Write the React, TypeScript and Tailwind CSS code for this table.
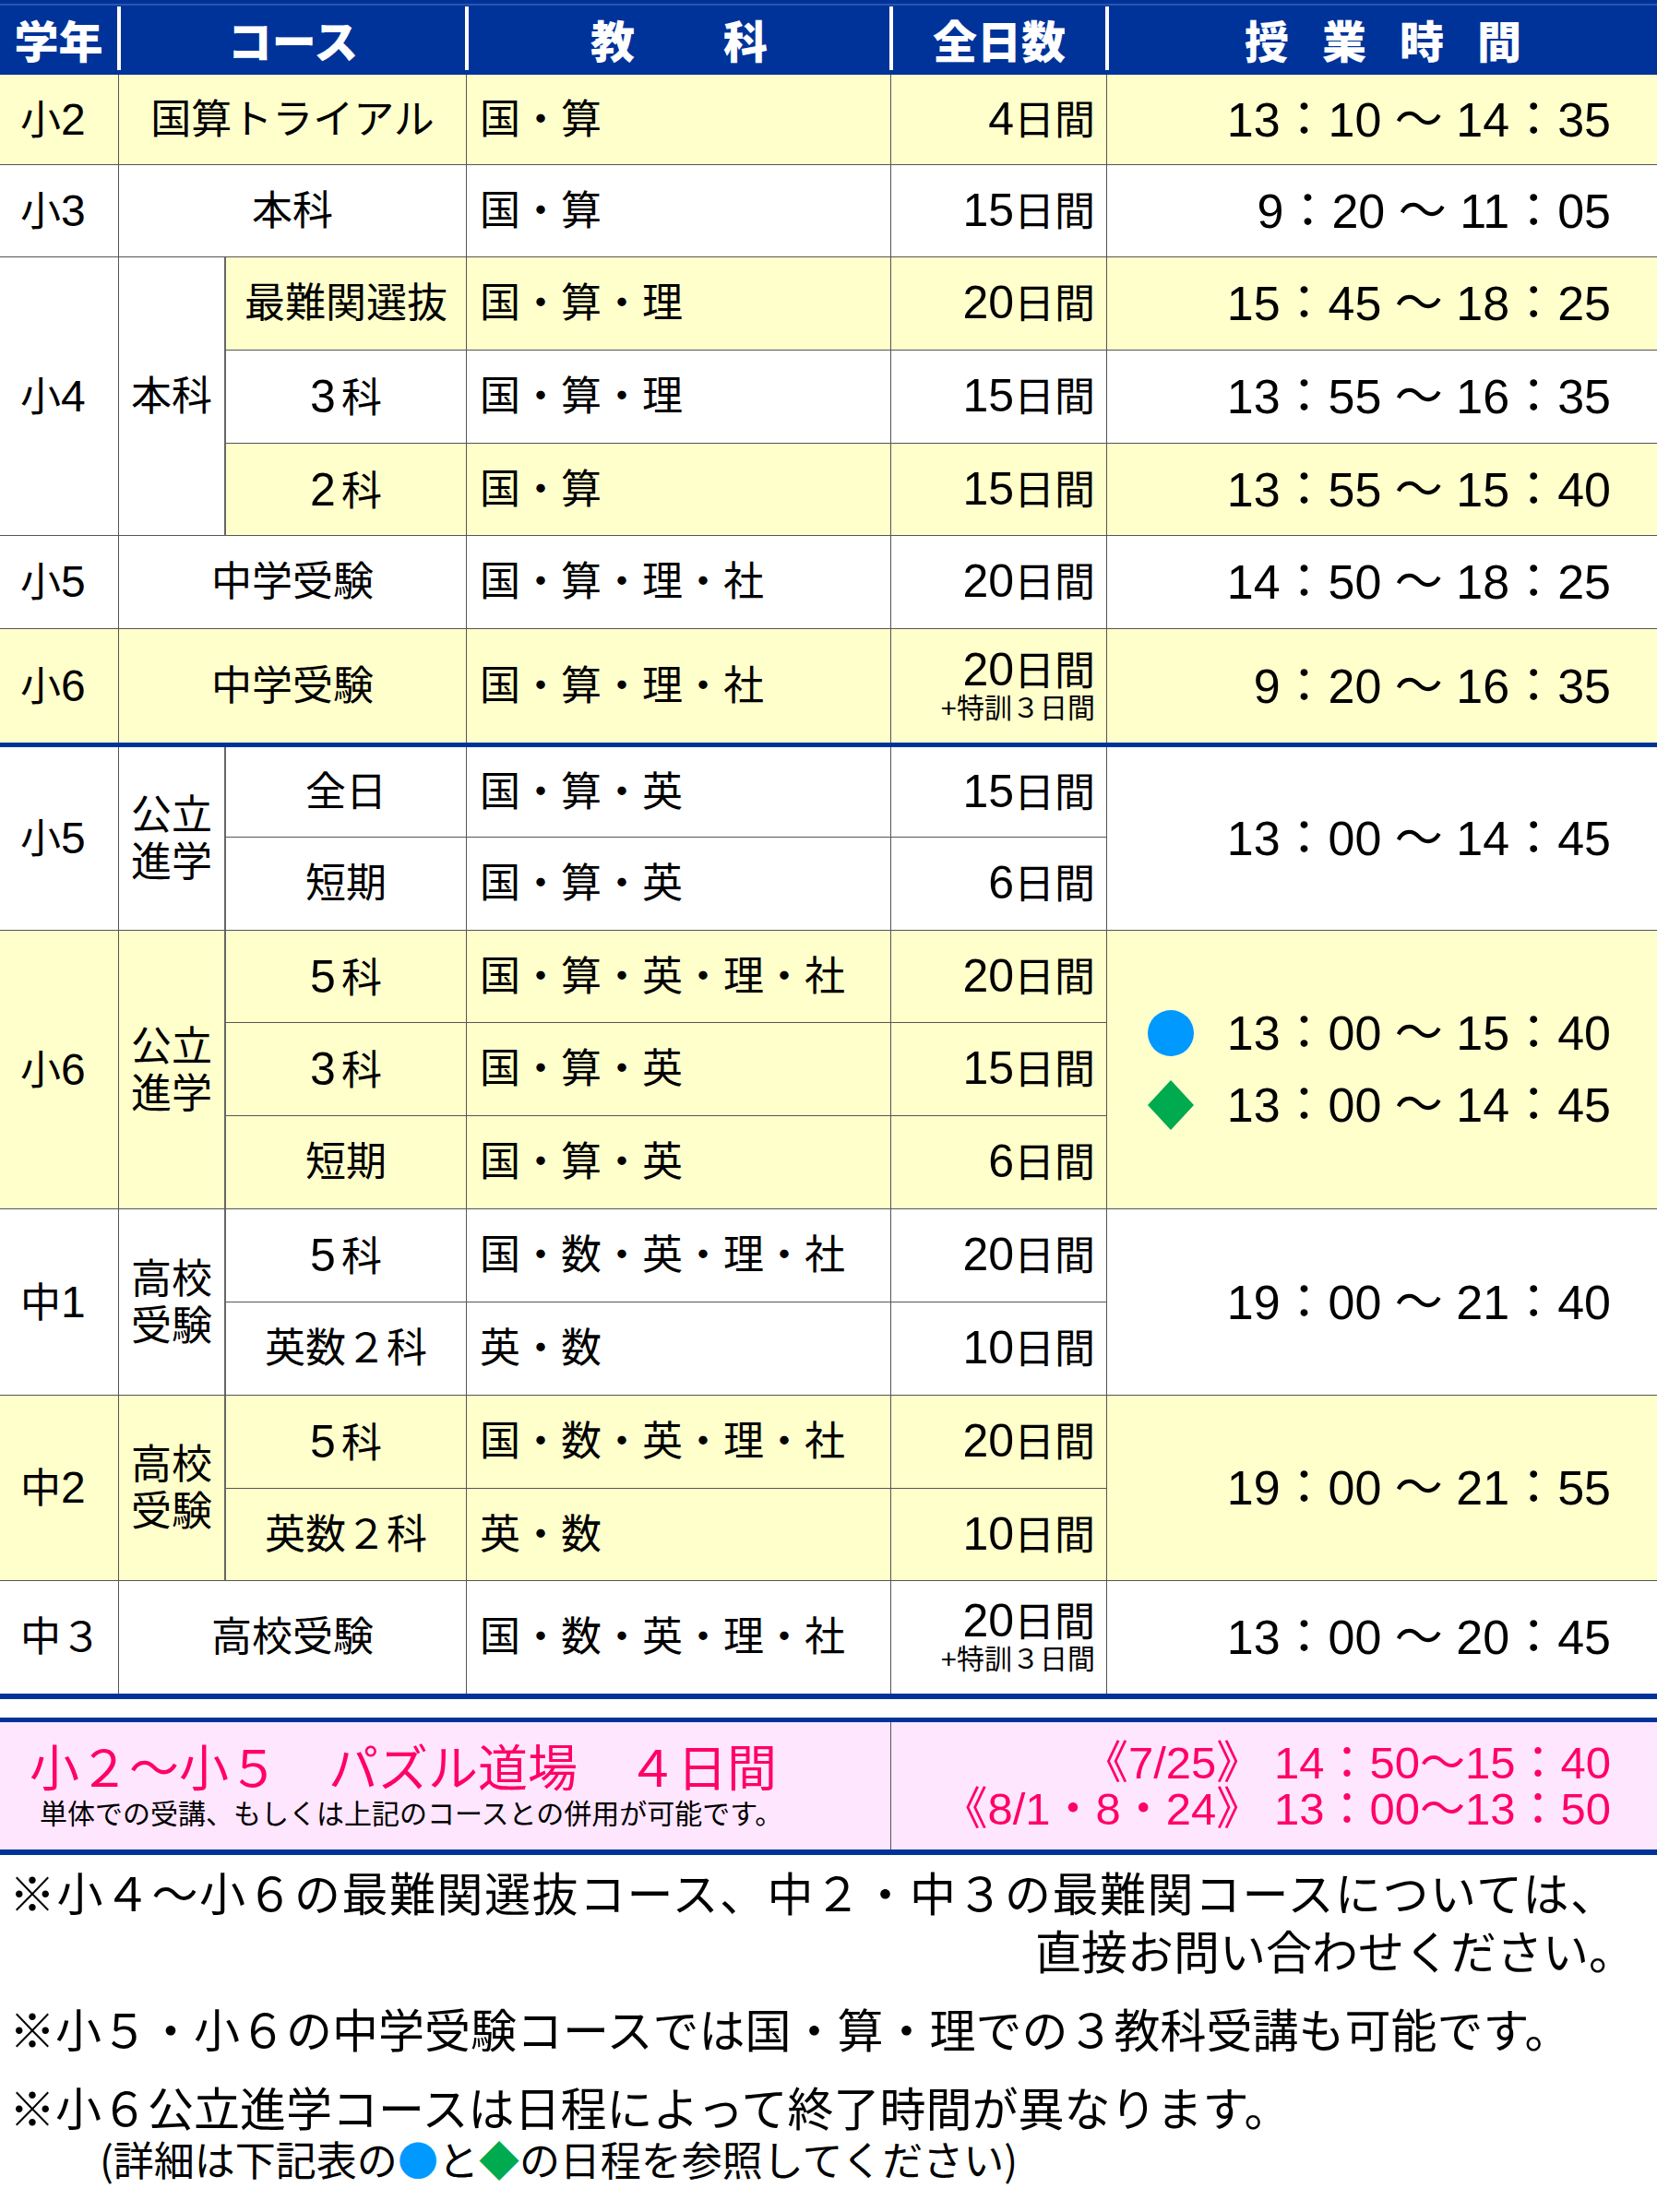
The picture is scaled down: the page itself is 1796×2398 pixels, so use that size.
import type { ReactNode } from 'react';

type Align = 'g' | 'l' | 'c' | 'd' | 'r';

// 셀 정렬: 학년 / 교과 / 코스 / 일수 / 시간
const alignCls: Record<Align, string> = {
  g: 'justify-start pl-[22px]',
  l: 'justify-start pl-[14px]',
  c: 'justify-center',
  d: 'justify-end pr-[12px]',
  r: 'justify-end pr-[50px]',
};

interface CellProps {
  children?: ReactNode;
  className?: string;
  align?: Align;
  yellow?: boolean;
  noR?: boolean;
  noB?: boolean;
  thickR?: boolean;
}

const Cell = ({ children, className = '', align = 'c', yellow = false, noR = false, noB = false, thickR = false }: CellProps) => {
  const right = noR ? '' : thickR ? 'border-r-2 border-r-[#666]' : 'border-r border-r-[#555]';
  const bottom = noB ? '' : 'border-b border-b-[#555]';
  return (
    <div className={`flex items-center ${alignCls[align]} ${yellow ? 'bg-[#ffffcc]' : 'bg-white'} ${right} ${bottom} ${className}`}>
      {children}
    </div>
  );
};

const T = ({ children }: { children: ReactNode }) => <span className="text-[52px] leading-none">{children}</span>;

// 학년: 小2 등
const G = ({ k, n }: { k: string; n: string }) => (
  <span>
    {k}
    <span className="text-[48px]">{n}</span>
  </span>
);

// 과목수: 5科 등
const K = ({ n }: { n: string }) => (
  <span>
    <span className="mr-[6px] text-[50px]">{n}</span>科
  </span>
);

const Days = ({ n, extra = false }: { n: string; extra?: boolean }) => (
  <div className="flex flex-col items-end">
    <span className="leading-[46px]">
      <span className="text-[50px]">{n}</span>日間
    </span>
    {extra && <span className="text-[30px] leading-[34px]">+特訓３日間</span>}
  </div>
);

const Two = ({ a, b }: { a: string; b: string }) => (
  <div className="flex flex-col items-center leading-[51px]">
    <span>{a}</span>
    <span>{b}</span>
  </div>
);

const Sep = () => <div className="h-[69px] w-[4px] shrink-0 bg-white" />;

const Diamond = () => (
  <svg width="50" height="54" viewBox="0 0 50 54">
    <polygon points="25,0 50,27 25,54 0,27" fill="#00aa4f" />
  </svg>
);

const cols = 'grid grid-cols-[129px_116px_261px_460px_234px_596px]';

const App = () => {
  return (
    <div className="w-full bg-white pb-[40px] font-['Liberation_Sans','Noto_Sans_CJK_JP',sans-serif] text-black">
      {/* 헤더 */}
      <div className="flex h-[81px] flex-col bg-[#003399] font-['Noto_Sans_CJK_JP',sans-serif] text-[48px] font-black leading-none text-white">
        <div className="h-[4px]" />
        <div className="h-[2px] bg-[#2a56b0]" />
        <div className="flex flex-1 items-center pb-[4px]">
          <div className="w-[127px] text-center">学年</div>
          <Sep />
          <div className="w-[373px] text-center">コース</div>
          <Sep />
          <div className="w-[456px] text-center">教　　科</div>
          <Sep />
          <div className="w-[230px] text-center">全日数</div>
          <Sep />
          <div className="flex flex-1 justify-center gap-[36px]">
            <span>授</span>
            <span>業</span>
            <span>時</span>
            <span>間</span>
          </div>
        </div>
      </div>

      {/* 본과 */}
      <div className={`${cols} grid-rows-[98px_100px_101px_101px_100px_101px_123px] text-[44px] leading-none`}>
        <Cell align="g" yellow><G k="小" n="2" /></Cell>
        <Cell className="col-span-2" yellow>国算トライアル</Cell>
        <Cell align="l" yellow>国・算</Cell>
        <Cell align="d" yellow><Days n="4" /></Cell>
        <Cell align="r" yellow noR><T>13：10 ～ 14：35</T></Cell>

        <Cell align="g"><G k="小" n="3" /></Cell>
        <Cell className="col-span-2">本科</Cell>
        <Cell align="l">国・算</Cell>
        <Cell align="d"><Days n="15" /></Cell>
        <Cell align="r" noR><T>9：20 ～ 11：05</T></Cell>

        <Cell align="g" className="row-span-3"><G k="小" n="4" /></Cell>
        <Cell className="row-span-3" thickR>本科</Cell>
        <Cell yellow>最難関選抜</Cell>
        <Cell align="l" yellow>国・算・理</Cell>
        <Cell align="d" yellow><Days n="20" /></Cell>
        <Cell align="r" yellow noR><T>15：45 ～ 18：25</T></Cell>

        <Cell><K n="3" /></Cell>
        <Cell align="l">国・算・理</Cell>
        <Cell align="d"><Days n="15" /></Cell>
        <Cell align="r" noR><T>13：55 ～ 16：35</T></Cell>

        <Cell yellow><K n="2" /></Cell>
        <Cell align="l" yellow>国・算</Cell>
        <Cell align="d" yellow><Days n="15" /></Cell>
        <Cell align="r" yellow noR><T>13：55 ～ 15：40</T></Cell>

        <Cell align="g"><G k="小" n="5" /></Cell>
        <Cell className="col-span-2">中学受験</Cell>
        <Cell align="l">国・算・理・社</Cell>
        <Cell align="d"><Days n="20" /></Cell>
        <Cell align="r" noR><T>14：50 ～ 18：25</T></Cell>

        <Cell align="g" yellow noB><G k="小" n="6" /></Cell>
        <Cell className="col-span-2" yellow noB>中学受験</Cell>
        <Cell align="l" yellow noB>国・算・理・社</Cell>
        <Cell align="d" yellow noB><Days n="20" extra /></Cell>
        <Cell align="r" yellow noR noB><T>9：20 ～ 16：35</T></Cell>
      </div>

      <div className="h-[5px] bg-[#003399]" />

      {/* 공립진학 · 고교수험 */}
      <div className={`${cols} grid-rows-[98px_101px_100px_101px_101px_101px_101px_101px_100px_122px] text-[44px] leading-none`}>
        <Cell align="g" className="row-span-2"><G k="小" n="5" /></Cell>
        <Cell className="row-span-2" thickR><Two a="公立" b="進学" /></Cell>
        <Cell>全日</Cell>
        <Cell align="l">国・算・英</Cell>
        <Cell align="d"><Days n="15" /></Cell>
        <Cell align="r" className="row-span-2" noR><T>13：00 ～ 14：45</T></Cell>
        <Cell>短期</Cell>
        <Cell align="l">国・算・英</Cell>
        <Cell align="d"><Days n="6" /></Cell>

        <Cell align="g" className="row-span-3" yellow><G k="小" n="6" /></Cell>
        <Cell className="row-span-3" yellow thickR><Two a="公立" b="進学" /></Cell>
        <Cell yellow><K n="5" /></Cell>
        <Cell align="l" yellow>国・算・英・理・社</Cell>
        <Cell align="d" yellow><Days n="20" /></Cell>
        <Cell align="r" className="row-span-3" yellow noR>
          <div className="flex flex-col gap-[25px]">
            <div className="flex items-center gap-[36px]">
              <div className="h-[50px] w-[50px] rounded-full bg-[#0099ff]" />
              <T>13：00 ～ 15：40</T>
            </div>
            <div className="flex items-center gap-[36px]">
              <Diamond />
              <T>13：00 ～ 14：45</T>
            </div>
          </div>
        </Cell>
        <Cell yellow><K n="3" /></Cell>
        <Cell align="l" yellow>国・算・英</Cell>
        <Cell align="d" yellow><Days n="15" /></Cell>
        <Cell yellow>短期</Cell>
        <Cell align="l" yellow>国・算・英</Cell>
        <Cell align="d" yellow><Days n="6" /></Cell>

        <Cell align="g" className="row-span-2"><G k="中" n="1" /></Cell>
        <Cell className="row-span-2" thickR><Two a="高校" b="受験" /></Cell>
        <Cell><K n="5" /></Cell>
        <Cell align="l">国・数・英・理・社</Cell>
        <Cell align="d"><Days n="20" /></Cell>
        <Cell align="r" className="row-span-2" noR><T>19：00 ～ 21：40</T></Cell>
        <Cell>英数２科</Cell>
        <Cell align="l">英・数</Cell>
        <Cell align="d"><Days n="10" /></Cell>

        <Cell align="g" className="row-span-2" yellow><G k="中" n="2" /></Cell>
        <Cell className="row-span-2" yellow thickR><Two a="高校" b="受験" /></Cell>
        <Cell yellow><K n="5" /></Cell>
        <Cell align="l" yellow>国・数・英・理・社</Cell>
        <Cell align="d" yellow><Days n="20" /></Cell>
        <Cell align="r" className="row-span-2" yellow noR><T>19：00 ～ 21：55</T></Cell>
        <Cell yellow>英数２科</Cell>
        <Cell align="l" yellow>英・数</Cell>
        <Cell align="d" yellow><Days n="10" /></Cell>

        <Cell align="g" noB>中３</Cell>
        <Cell className="col-span-2" noB>高校受験</Cell>
        <Cell align="l" noB>国・数・英・理・社</Cell>
        <Cell align="d" noB><Days n="20" extra /></Cell>
        <Cell align="r" noR noB><T>13：00 ～ 20：45</T></Cell>
      </div>

      <div className="h-[6px] bg-[#003399]" />
      <div className="h-[20px]" />
      <div className="h-[5px] bg-[#003399]" />

      {/* 퍼즐 도장 */}
      <div className="flex h-[138px] bg-[#ffe6ff]">
        <div className="flex w-[966px] flex-col justify-center border-r border-r-[#555] pl-[32px]">
          <div className="font-['Noto_Sans_CJK_JP',sans-serif] text-[54px] leading-[56px] text-[#ff0066]">
            小２～小５　パズル道場　４日間
          </div>
          <div className="pl-[11px] font-['Noto_Sans_CJK_JP',sans-serif] text-[30px] leading-[44px]">
            単体での受講、もしくは上記のコースとの併用が可能です。
          </div>
        </div>
        <div className="flex flex-1 flex-col items-end justify-center pr-[50px] text-[49px] leading-[50px] text-[#ff0066]">
          <div>《7/25》 14：50～15：40</div>
          <div>《8/1・8・24》 13：00～13：50</div>
        </div>
      </div>
      <div className="h-[6px] bg-[#003399]" />

      {/* 주의사항 */}
      <div className="pl-[10px] pt-[8px] font-['Noto_Sans_CJK_JP',sans-serif] text-[50px] leading-[63px]">
        <p className="tracking-[1.5px]">※小４～小６の最難関選抜コース、中２・中３の最難関コースについては、</p>
        <p className="pr-[24px] text-right">直接お問い合わせください。</p>
        <p className="mt-[22px]">※小５・小６の中学受験コースでは国・算・理での３教科受講も可能です。</p>
        <p className="mt-[22px]">※小６公立進学コースは日程によって終了時間が異なります。</p>
        <p className="pl-[98px] text-[44px] leading-[50px]">
          (詳細は下記表の<span className="text-[#0099ff]">●</span>と<span className="text-[#00aa4f]">◆</span>の日程を参照してください)
        </p>
      </div>
    </div>
  );
};

export default App;
